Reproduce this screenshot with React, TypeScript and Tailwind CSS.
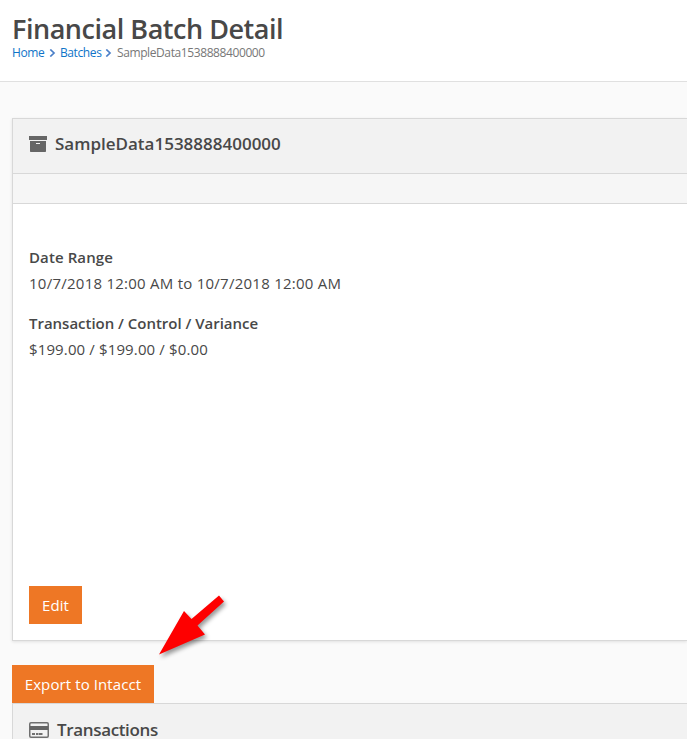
import React from "react";

function Chevron() {
  return (
    <svg width="7" height="8" viewBox="0 0 7 8" className="block shrink-0" fill="none" stroke="#4a7fc8" strokeWidth="1.7">
      <path d="M1.300 0.500L5 4L1.300 7.500" />
    </svg>
  );
}

function ArchiveIcon() {
  return (
    <svg width="18" height="16" viewBox="0 0 18 16" className="block shrink-0" fill="#666">
      <path d="M0 0h18v4H0z" />
      <path fillRule="evenodd" d="M1 5h16v10.3q0 .7-.7.7H1.700q-.7 0-.7-.7zM7 7v1h4V7z" />
    </svg>
  );
}

function CardIcon() {
  return (
    <svg width="20" height="16" viewBox="0 0 20 16" className="block shrink-0">
      <rect x="0.75" y="0.75" width="18.5" height="14.5" rx="1.2" fill="none" stroke="#707070" strokeWidth="1.5" />
      <path d="M1 4h18v4H1z" fill="#666" />
      <path d="M3 11h3v2H3zM7 11h2.500v2H7zM10 11h3.500v2H10z" fill="#707070" />
    </svg>
  );
}

export default function App() {
  return (
    <div className="relative flex h-[739px] w-[687px] flex-col overflow-hidden bg-[#fafafa] font-['Open_Sans','Noto_Sans',sans-serif] text-[15px] text-[#484848]">
      <header className="h-[82px] shrink-0 border-b border-[#e0e0e0] bg-white pl-3 pt-[12px]">
        <h1 className="h-[33px] whitespace-nowrap text-[27px] font-semibold leading-[33px] tracking-[-0.47px]">Financial Batch Detail</h1>
        <nav className="flex h-4 items-center whitespace-nowrap text-[12px] leading-4 text-[#0f74c8]">
          <a className="w-[37px] tracking-[-0.4px]">Home</a>
          <Chevron />
          <a className="ml-1 w-[45px] tracking-[-0.4px]">Batches</a>
          <Chevron />
          <span className="ml-[5px] tracking-[-0.4px] text-[#777]">SampleData1538888400000</span>
        </nav>
      </header>
      <main className="flex flex-col pl-3 pt-9">
        <section className="flex h-[523px] flex-col border-y border-l border-[#d8d8d8] bg-white shadow-[0_1px_3px_rgba(0,0,0,0.1)]">
          <div className="flex h-[55px] shrink-0 items-center border-b border-[#d8d8d8] bg-[#f2f2f2] pb-1 pl-4">
            <ArchiveIcon />
            <h2 className="ml-2 whitespace-nowrap text-[17px] font-semibold leading-6 tracking-[0px]">SampleData1538888400000</h2>
          </div>
          <div className="h-[30px] shrink-0 border-b border-[#d8d8d8] bg-[#f6f6f6]" />
          <div className="flex grow flex-col items-start pb-4 pl-4 pt-10">
            <dl className="whitespace-nowrap leading-[26px]">
              <dt className="font-semibold tracking-[0.1px]">Date Range</dt>
              <dd className="tracking-[0.25px]">10/7/2018 12:00 AM to 10/7/2018 12:00 AM</dd>
              <dt className="mt-[14px] font-semibold tracking-[-0.02px]">Transaction / Control / Variance</dt>
              <dd className="tracking-[0.13px]">$199.00 / $199.00 / $0.00</dd>
            </dl>
            <button className="mt-auto h-[38px] w-[53px] whitespace-nowrap bg-[#ee7725] tracking-[0.1px] text-white">Edit</button>
          </div>
        </section>
        <button className="mt-6 h-[38px] w-[142px] whitespace-nowrap bg-[#ee7725] tracking-[0.1px] text-white">Export to Intacct</button>
        <section className="h-[55px] border-l border-t border-[#d8d8d8] bg-[#f2f2f2]">
          <div className="flex h-[51px] items-center pl-4">
            <CardIcon />
            <h2 className="ml-2 whitespace-nowrap text-[17px] font-semibold leading-6 tracking-[-0.35px]">Transactions</h2>
          </div>
        </section>
      </main>
      <svg width="84" height="80" viewBox="150 585 84 80" className="absolute left-[150px] top-[585px] drop-shadow-[2px_3px_2px_rgba(0,0,0,0.4)]">
        <path d="M159 654.500L184 611L191.500 619L219 595.500L224 601.500L197.500 625.500L205 634.500Z" fill="#fe0000" />
      </svg>
    </div>
  );
}
